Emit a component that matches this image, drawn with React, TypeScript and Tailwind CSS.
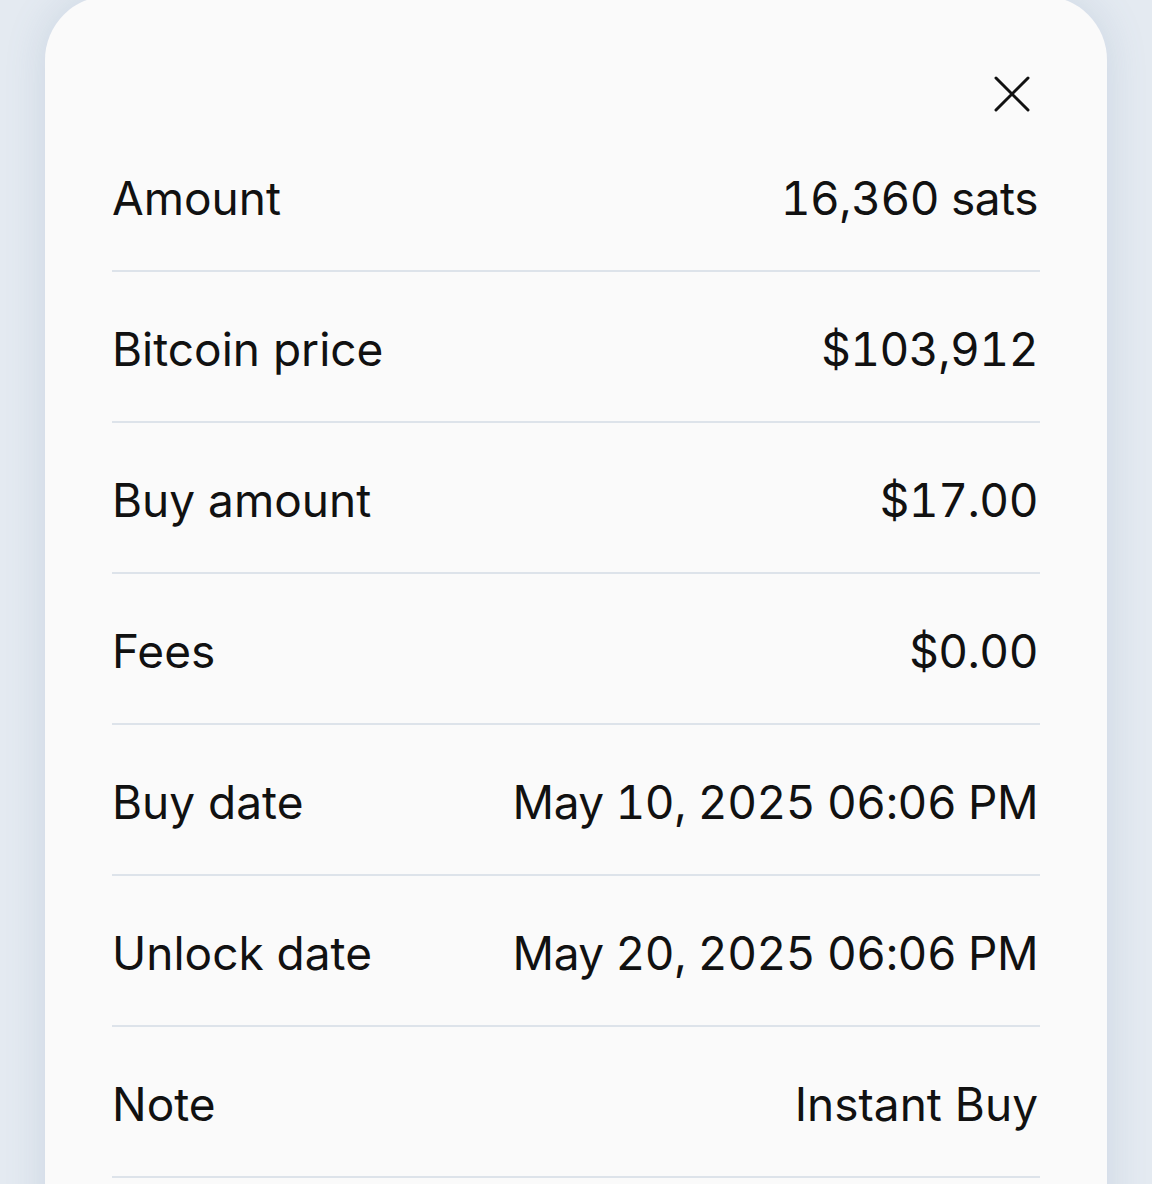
const rows: { label: string; value: string; num?: boolean }[] = [
  { label: "Amount", value: "16,360 sats", num: true },
  { label: "Bitcoin price", value: "$103,912", num: true },
  { label: "Buy amount", value: "$17.00", num: true },
  { label: "Fees", value: "$0.00", num: true },
  { label: "Buy date", value: "May 10, 2025 06:06 PM", num: true },
  { label: "Unlock date", value: "May 20, 2025 06:06 PM", num: true },
  { label: "Note", value: "Instant Buy" },
];

export default function App() {
  return (
    <div
      className="h-[1184px] w-[1152px] overflow-hidden bg-[#e4eaf1] px-[45px]"
      style={{ fontFamily: "Inter, 'Noto Sans', sans-serif" }}
    >
      <div className="-mt-[4px] min-h-[1300px] rounded-t-[64px] bg-[#fafafa] px-[67px] pt-[76px] shadow-[0_0_40px_rgba(90,120,160,0.18)]">
        {/* close */}
        <div className="flex justify-end">
          <button className="mr-[6px] flex h-[44px] w-[44px] items-center justify-center text-[#111]">
            <svg width="36" height="36" viewBox="0 0 36 36" fill="none">
              <path
                d="M2 2L34 34M34 2L2 34"
                stroke="currentColor"
                strokeWidth="3"
                strokeLinecap="round"
              />
            </svg>
          </button>
        </div>

        <div className="mt-[5px]">
          {rows.map((r) => (
            <div
              key={r.label}
              className="flex h-[151px] items-center justify-between border-b-2 border-[#dde3ea] pt-[4px] text-[46px] leading-none text-[#111]"
            >
              <span>{r.label}</span>
              <span className={r.num ? "mr-[2px] tabular-nums tracking-[-0.5px]" : "mr-[2px]"}>
                {r.value}
              </span>
            </div>
          ))}
        </div>
      </div>
    </div>
  );
}
